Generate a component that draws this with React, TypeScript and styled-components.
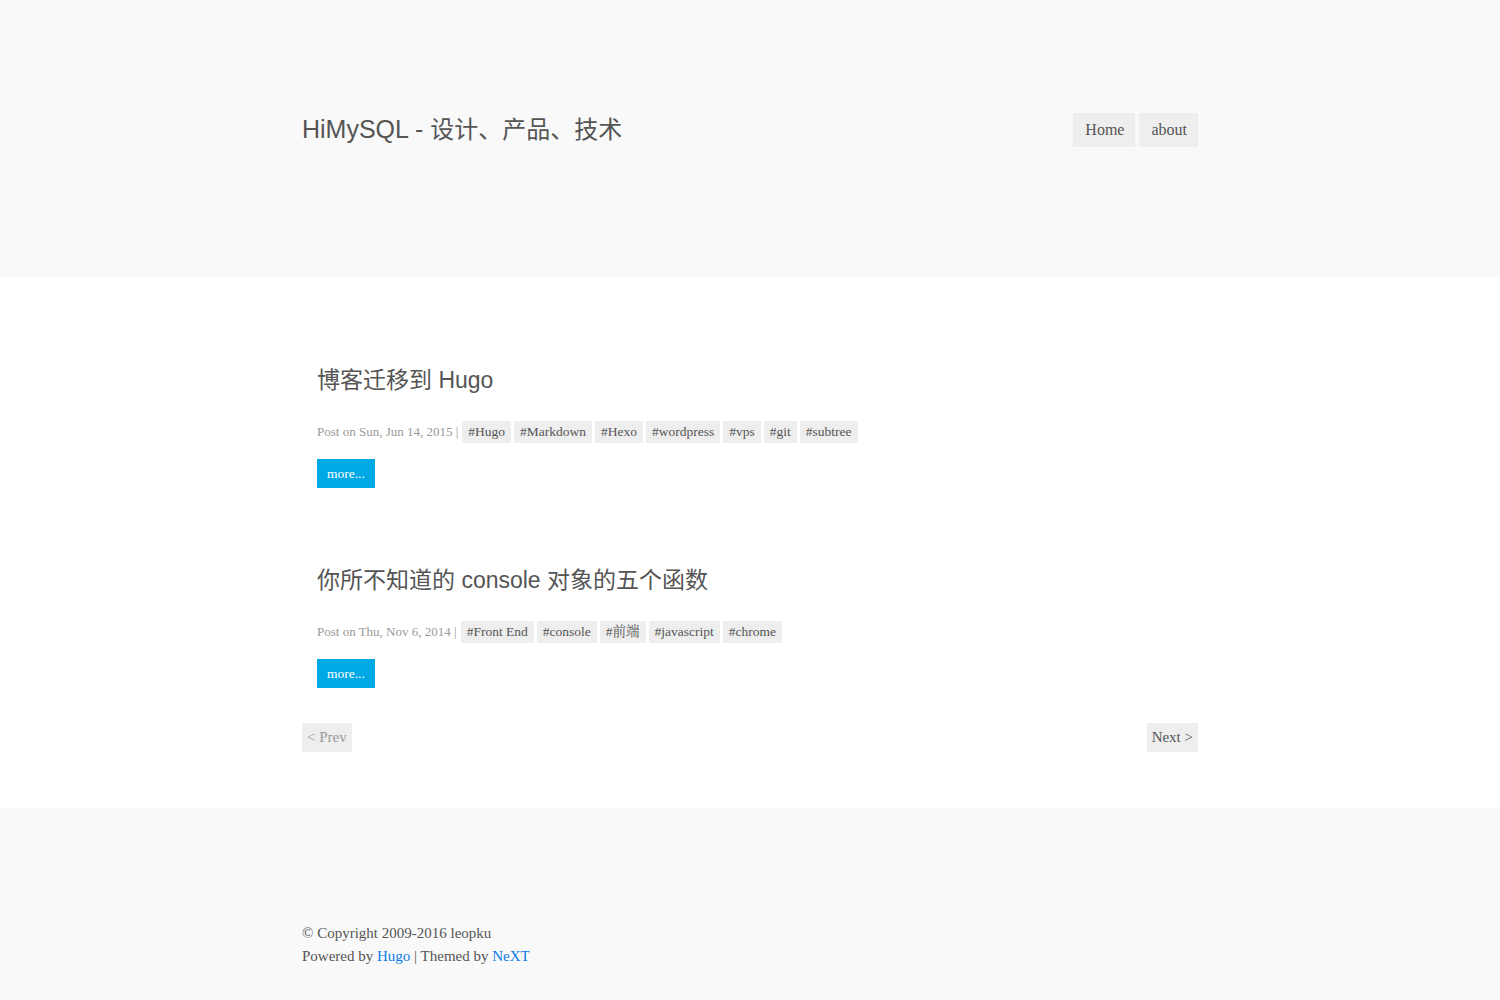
import React from "react";
import styled, { createGlobalStyle } from "styled-components";

const Global = createGlobalStyle`
  html, body { margin: 0; padding: 0; background: #fff; }
  body { font-family: "Liberation Serif", serif; color: #555; }
  a { text-decoration: none; }
`;

const Page = styled.div`
  display: flex;
  flex-direction: column;
  min-height: 1000px;
`;

const Header = styled.header`
  background: #f9f9f9;
  height: 277px;
  box-sizing: border-box;
  padding-top: 113px;
`;

const Container = styled.div`
  width: 900px;
  box-sizing: border-box;
  margin: 0 auto;
  padding: 0 2px;
`;

const HeaderRow = styled(Container)`
  display: flex;
  justify-content: space-between;
  align-items: center;
  height: 34px;
`;

const SiteTitle = styled.a`
  font-family: "Liberation Sans", "Noto Sans CJK SC", sans-serif;
  font-size: 24px;
  line-height: 34px;
  color: #555;
  margin-top: -1px;
`;

const Latin = styled.span`
  font-size: 25px;
`;

const Nav = styled.nav`
  display: flex;
  gap: 4px;
`;

const NavItem = styled.a`
  display: flex;
  align-items: center;
  height: 34px;
  padding: 0 11px 0 12px;
  background: #eee;
  color: #555;
  font-size: 16px;
`;

const Main = styled.main`
  background: #fff;
  height: 531px;
  box-sizing: border-box;
  padding-top: 87px;
`;

const PostList = styled.div`
  display: flex;
  flex-direction: column;
  padding-left: 15px;
`;

const Post = styled.article`
  height: 200px;
  display: flex;
  flex-direction: column;
`;

const PostTitle = styled.h2`
  margin: 0;
  font-family: "Liberation Sans", "Noto Sans CJK SC", sans-serif;
  font-weight: normal;
  font-size: 23px;
  line-height: 32px;
  color: #555;
`;

const Meta = styled.div`
  display: flex;
  align-items: center;
  margin-top: 25px;
  font-size: 13px;
  color: #999;
  gap: 3px;
`;

const MetaText = styled.span`
  margin-right: 1px;
`;

const Tag = styled.a`
  display: flex;
  align-items: center;
  height: 22px;
  line-height: 1;
  padding: 0 6px;
  background: #eee;
  color: #555;
  font-size: 13.5px;
  font-family: "Liberation Serif", "Noto Serif CJK SC", "Noto Sans CJK SC", serif;
`;

const More = styled.a`
  align-self: flex-start;
  display: flex;
  align-items: center;
  margin-top: 16px;
  height: 29px;
  padding: 0 10px;
  background: #00a8e6;
  color: #fff;
  font-size: 13.5px;
`;

const Pager = styled(Container)`
  display: flex;
  justify-content: space-between;
  margin-top: -41px;
`;

const PageLink = styled.a<{ $active?: boolean }>`
  display: flex;
  align-items: center;
  height: 29px;
  padding: 0 5px;
  background: #eee;
  color: ${(p) => (p.$active ? "#555" : "#999")};
  font-size: 15px;
`;

const Footer = styled.footer`
  background: #f9f9f9;
  flex: 1;
  box-sizing: border-box;
  padding-top: 114px;
`;

const FooterText = styled(Container)`
  font-size: 15px;
  line-height: 23px;
  color: #555;
`;

const Link = styled.a`
  color: #0a7be6;
`;

const posts = [
  {
    title: "博客迁移到 Hugo",
    date: "Sun, Jun 14, 2015",
    tags: ["Hugo", "Markdown", "Hexo", "wordpress", "vps", "git", "subtree"],
  },
  {
    title: "你所不知道的 console 对象的五个函数",
    date: "Thu, Nov 6, 2014",
    tags: ["Front End", "console", "前端", "javascript", "chrome"],
  },
];

export default function App() {
  return (
    <Page>
      <Global />
      <Header>
        <HeaderRow>
          <SiteTitle>
            <Latin>HiMySQL - </Latin>设计、产品、技术
          </SiteTitle>
          <Nav>
            <NavItem>Home</NavItem>
            <NavItem>about</NavItem>
          </Nav>
        </HeaderRow>
      </Header>
      <Main>
        <Container>
          <PostList>
            {posts.map((p) => (
              <Post key={p.title}>
                <PostTitle>{p.title}</PostTitle>
                <Meta>
                  <MetaText>Post on {p.date} |</MetaText>
                  {p.tags.map((t) => (
                    <Tag key={t}>#{t}</Tag>
                  ))}
                </Meta>
                <More>more...</More>
              </Post>
            ))}
          </PostList>
        </Container>
        <Pager>
          <PageLink>&lt; Prev</PageLink>
          <PageLink $active>Next &gt;</PageLink>
        </Pager>
      </Main>
      <Footer>
        <FooterText>
          <div>© Copyright 2009-2016 leopku</div>
          <div>
            Powered by <Link>Hugo</Link> | Themed by <Link>NeXT</Link>
          </div>
        </FooterText>
      </Footer>
    </Page>
  );
}
